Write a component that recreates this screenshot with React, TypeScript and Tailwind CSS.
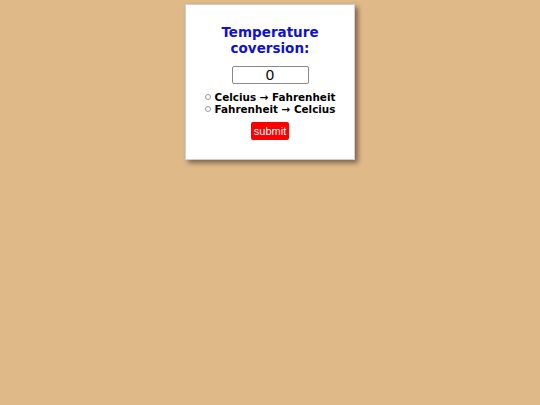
import React from "react";

export default function App() {
  return (
    <div className="w-[540px] h-[405px] bg-[#e0b989] flex justify-center items-start pt-[4px]">
      <div className="w-[170px] h-[156px] bg-white border border-[#cfcfcf] shadow-[3px_3px_5px_rgba(0,0,0,0.45)] flex flex-col items-center pt-[19px]">
        <h1
          className="text-[13.5px] leading-[16px] font-bold text-[#1010d0] text-center"
          style={{ fontFamily: '"DejaVu Sans", sans-serif' }}
        >
          Temperature
          <br />
          coversion:
        </h1>
        <input
          defaultValue="0"
          className="mt-[10px] w-[77px] h-[18px] border border-[#8a8a8a] rounded-[2px] text-center text-[15px] text-black outline-none"
          style={{ fontFamily: '"Liberation Sans", sans-serif' }}
        />
        <div
          className="mt-[7px] flex flex-col text-[10.4px] leading-[12px] font-bold text-black"
          style={{ fontFamily: '"DejaVu Sans", sans-serif' }}
        >
          <label className="flex items-center gap-[4px]">
            <span className="w-[6px] h-[6px] rounded-full border border-[#999]" />
            Celcius → Fahrenheit
          </label>
          <label className="flex items-center gap-[4px]">
            <span className="w-[6px] h-[6px] rounded-full border border-[#999]" />
            Fahrenheit → Celcius
          </label>
        </div>
        <button
          className="mt-[7px] w-[38px] h-[18px] bg-[#ff0000] rounded-[2px] text-white text-[11px] leading-[18px]"
          style={{ fontFamily: '"Liberation Sans", sans-serif' }}
        >
          submit
        </button>
      </div>
    </div>
  );
}
